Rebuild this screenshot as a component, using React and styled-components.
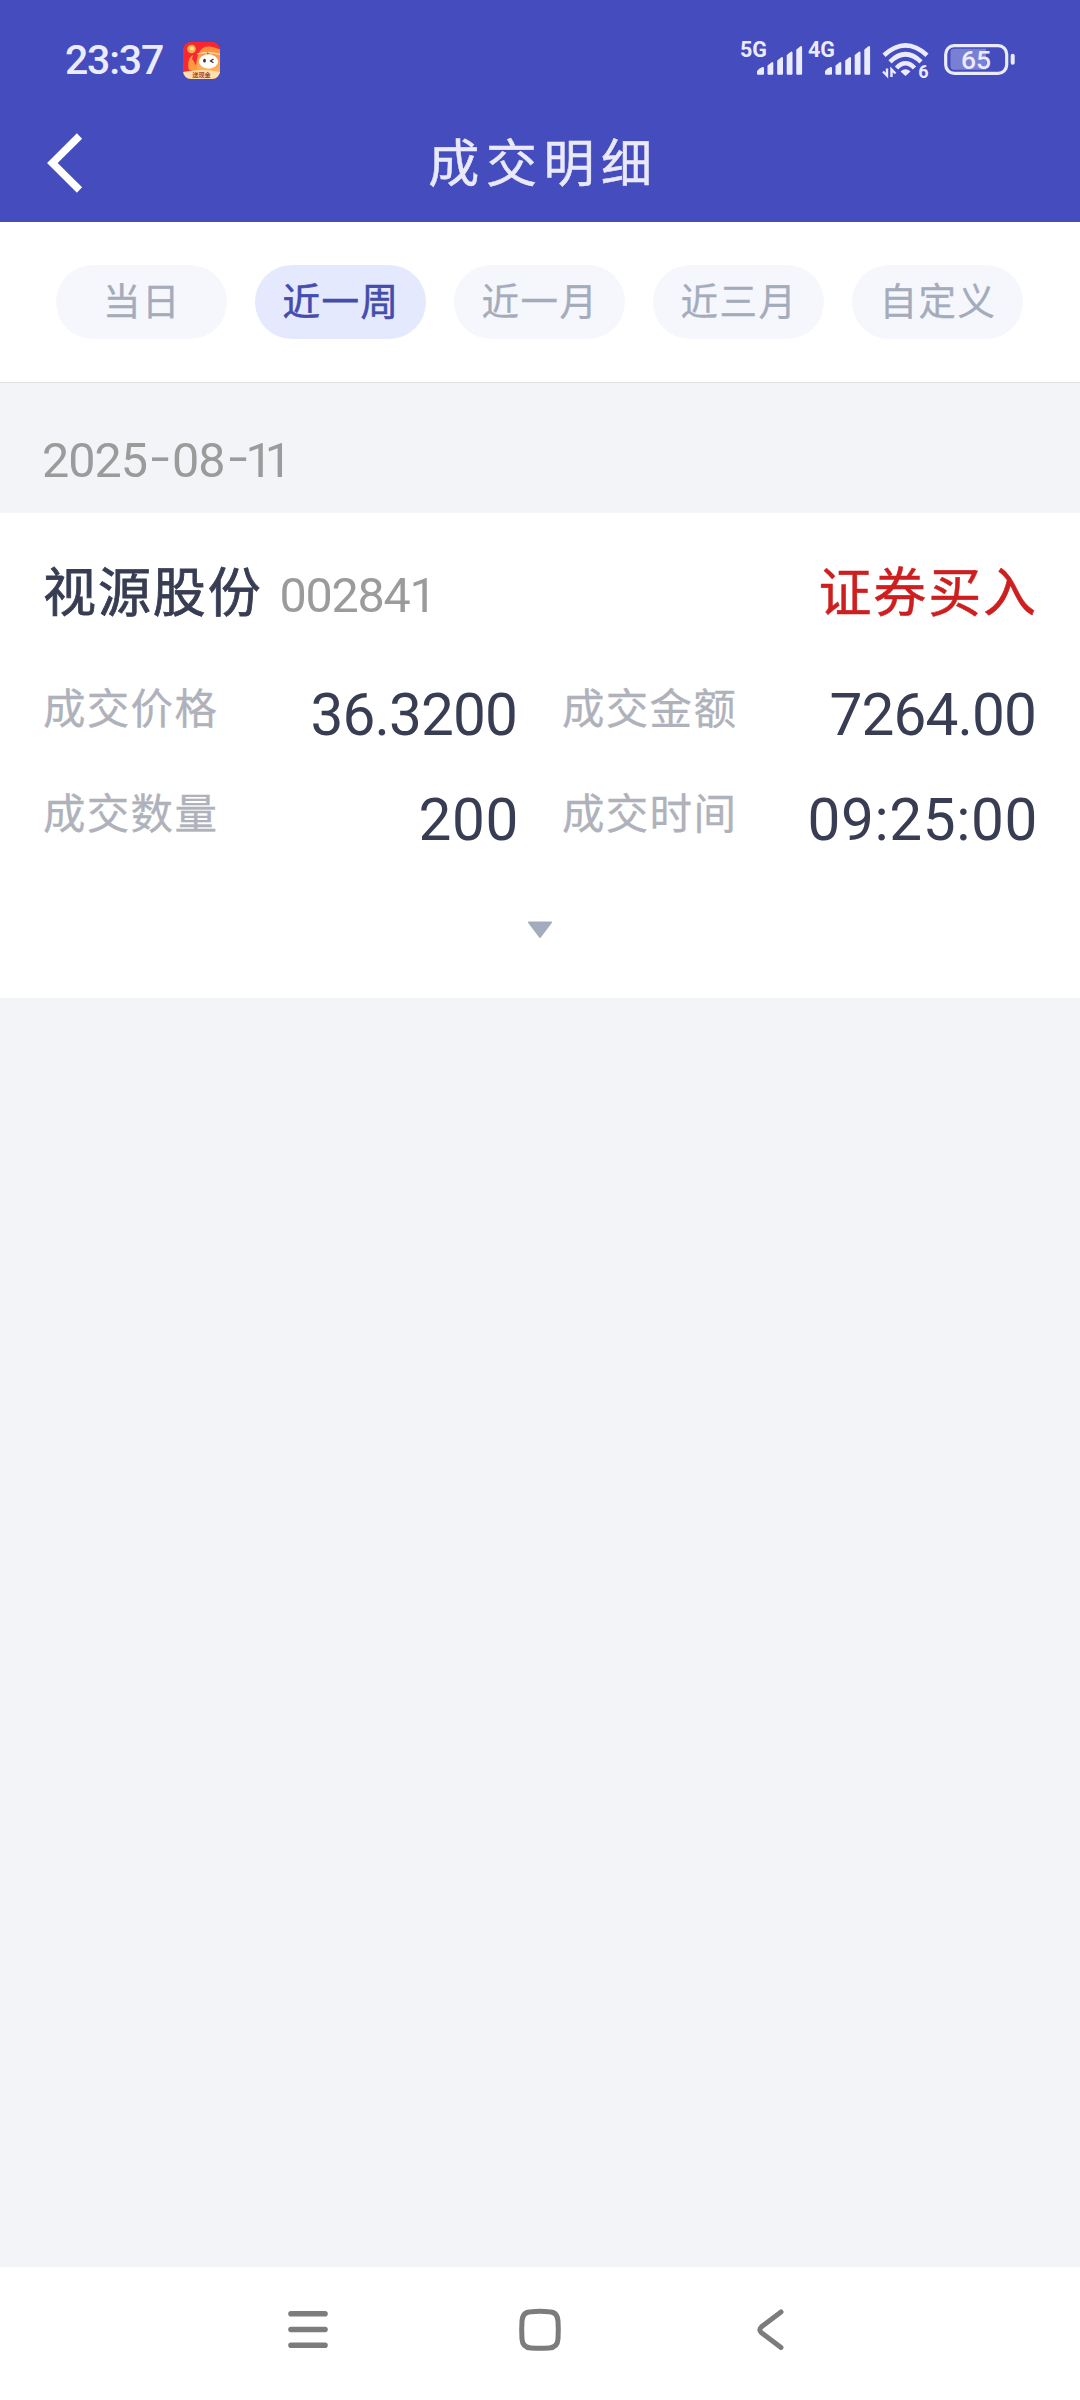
import React, { useState } from "react";
import styled, { createGlobalStyle } from "styled-components";

const GlobalStyle = createGlobalStyle`
  * {
    box-sizing: border-box;
  }

  body {
    margin: 0;
    background: #f3f4f7;
    font-family: Roboto, "Noto Sans CJK SC", sans-serif;
  }
`;

const Screen = styled.div`
  display: flex;
  flex-direction: column;
  width: 1080px;
  height: 2400px;
  background: #f3f4f7;
`;

const Header = styled.header`
  height: 222px;
  background: #444cbe;
`;

const StatusBar = styled.div`
  display: flex;
  align-items: center;
  height: 104px;
  padding: 16px 65px 0 65px;
  color: #ebebff;
`;

const Clock = styled.span`
  width: 118px;
  font-size: 41px;
  font-weight: 500;
  line-height: 48px;
  letter-spacing: -1.2px;
`;

const StatusIcons = styled.div`
  display: flex;
  margin-left: auto;
`;

const StatusIcon = styled.svg`
  height: 52px;
`;

const TitleBar = styled.div`
  display: grid;
  grid-template-columns: 120px 1fr 120px;
  align-items: center;
  height: 118px;
`;

const BackButton = styled.button`
  display: flex;
  padding: 0 0 0 44px;
  border: 0;
  background: none;
`;

const Title = styled.h1`
  margin: 0;
  padding: 4px 0 0 7px;
  color: #e9e9f9;
  font-size: 51px;
  font-weight: 400;
  line-height: 60px;
  letter-spacing: 6.6px;
  text-align: center;
  -webkit-text-stroke: 0.5px #e9e9f9;
`;

const Tabs = styled.nav`
  display: flex;
  gap: 28px;
  height: 161px;
  padding: 43px 56px 0;
  border-bottom: 1px solid #e2e2e3;
  background: #fff;
`;

const Tab = styled.button`
  width: 171px;
  height: 74px;
  padding: 1px 0 0 1px;
  border: 0;
  border-radius: 37px;
  background: ${(props) => (props.$active ? "#e5e9fe" : "#f6f7fc")};
  color: ${(props) => (props.$active ? "#444cac" : "#a4acbc")};
  font-family: inherit;
  font-size: 37.5px;
  line-height: 73px;
  letter-spacing: 1.5px;
  text-align: center;
  -webkit-text-stroke: ${(props) => (props.$active ? "0.6px" : "0.3px")};
`;

const DateRow = styled.div`
  height: 130px;
  padding: 49px 42px 0;
  color: #9b9b9b;
  font-size: 48.5px;
  line-height: 58px;
  letter-spacing: -1px;
`;

const Dash = styled.span`
  display: inline-block;
  width: 25px;
  text-align: center;
  transform: translateY(-3px) scaleX(1.4);
`;

const Day = styled.span`
  margin-left: -4px;
  letter-spacing: -8px;
`;

const Card = styled.section`
  display: flex;
  flex-direction: column;
  height: 485px;
  padding: 46px 43px 0;
  background: #fff;
`;

const CardHead = styled.div`
  display: flex;
  align-items: baseline;
  height: 112px;
  line-height: 70px;
`;

const StockName = styled.span`
  color: #383d54;
  font-size: 53px;
  letter-spacing: 1.9px;
  -webkit-text-stroke: 0.8px #383d54;
`;

const StockCode = styled.span`
  margin-left: 17px;
  color: #9b9b9b;
  font-size: 48.5px;
  letter-spacing: -1.3px;
`;

const Side = styled.span`
  margin: 0 -1px 0 auto;
  color: #cd1f1f;
  font-size: 53px;
  letter-spacing: 1.9px;
  -webkit-text-stroke: 0.5px #cd1f1f;
`;

const Fields = styled.dl`
  display: grid;
  grid-template-columns: 475px 475px;
  grid-auto-rows: 105px;
  column-gap: 44px;
  margin: 0;
`;

const Field = styled.div`
  display: flex;
  justify-content: space-between;
`;

const Label = styled.dt`
  padding-top: 9px;
  color: #afb1bb;
  font-size: 42.5px;
  line-height: 60px;
  letter-spacing: 1.3px;
  -webkit-text-stroke: 0.3px #afb1bb;
`;

const Value = styled.dd`
  margin: 0 ${(props) => (props.$decimal ? "1px" : "-1px")} 0 0;
  padding-top: 9px;
  color: #383d54;
  font-size: 58.5px;
  line-height: 70px;
  letter-spacing: ${(props) => (props.$decimal ? "-0.9px" : "0.6px")};
`;

const Expand = styled.button`
  align-self: center;
  display: flex;
  margin-top: 40px;
  padding: 0;
  border: 0;
  background: none;
`;

const NavBar = styled.footer`
  display: flex;
  justify-content: space-between;
  align-items: center;
  height: 133px;
  margin-top: auto;
  padding: 0 285px 8px;
  background: #fff;
`;

const AppBadge = () => (
  <svg width="37" height="37" viewBox="0 0 37 37">
    <defs>
      <clipPath id="badge">
        <rect width="37" height="37" rx="8" />
      </clipPath>
      <linearGradient id="hair" x1="0" y1="0" x2="0" y2="1">
        <stop offset="0" stopColor="#ff8a3c" />
        <stop offset="1" stopColor="#ffb65a" />
      </linearGradient>
    </defs>
    <g clipPath="url(#badge)">
      <rect width="37" height="37" fill="#f7282f" />
      <path d="M13 30C13 14 16 6 24 4.500C31 4 35 8 38 7V32H12Z" fill="url(#hair)" />
      <path d="M6 28C4 21 6 15 10 13L9 17C12 20 13 24 15 29Z" fill="#ff9a3e" />
      <circle cx="8.500" cy="7" r="4.300" fill="#ffb04a" />
      <circle cx="9" cy="6.500" r="2" fill="#ffe39a" />
      <path d="M14 12Q26 9 37 12.500" fill="none" stroke="#ffdca4" strokeWidth="1.200" />
      <path d="M24 10l3 2-3 1z" fill="#e9502b" />
      <ellipse cx="25.500" cy="19.500" rx="9.500" ry="7.200" fill="#fff" />
      <ellipse cx="21.500" cy="18.700" rx="1.400" ry="1.900" fill="#46302e" />
      <path d="M30.500 17l-3 2 3 1.700" fill="none" stroke="#46302e" strokeWidth="1.300" />
      <path d="M0 30Q18 26 37 30V37H0Z" fill="#ffdfae" />
      <text x="18.500" y="35.300" fill="#a8452a" fontSize="6.200" fontWeight="700" textAnchor="middle">
        送现金
      </text>
    </g>
  </svg>
);

const Signal = ({ label }) => (
  <StatusIcon width="68" viewBox="0 -6 68 52">
    <text x="0" y="17.300" fill="#ebebff" fontSize="21.500" fontWeight="700">
      {label}
    </text>
    <g fill="#ebebff" stroke="#ebebff" strokeWidth="2" strokeLinejoin="round">
      <path d="M18 31.500L20 29.500L23 28V33.700H18Z" />
      <path d="M28.500 26L32.300 23V33.700H28.500Z" />
      <path d="M38.200 21L42 18V33.700H38.200Z" />
      <path d="M47.700 15.500L51.500 12.500V33.700H47.700Z" />
      <path d="M57.300 10L61.100 7V33.700H57.300Z" />
    </g>
  </StatusIcon>
);

const Wifi = () => (
  <StatusIcon width="68" viewBox="0 -6 68 52">
    <g fill="none" stroke="#ebebff" strokeWidth="4.600">
      <path d="M8 15.200Q29.500 -4.600 51 15.200" />
      <path d="M14 21.800Q29.500 6.800 45 21.800" />
      <path d="M20.500 28Q29.500 18.500 38.500 28" />
    </g>
    <path d="M29.500 36L24.500 31.500Q29.500 27 34.500 31.500Z" fill="#ebebff" />
    <path d="M7 31.500l4 4V28.500M15.500 37V29.500l4 4" fill="none" stroke="#ebebff" strokeWidth="2.400" />
    <text x="42.200" y="38.300" fill="#ebebff" fontSize="18" fontWeight="700">
      6
    </text>
  </StatusIcon>
);

const Battery = () => (
  <StatusIcon width="71" viewBox="0 -6 71 52">
    <rect x="1.700" y="5.700" width="61" height="27.600" rx="8.500" fill="none" stroke="#ebebff" strokeWidth="3.200" />
    <path d="M10 8.800H42V29.800H10Q6.500 29.800 6.500 26V12Q6.500 8.800 10 8.800Z" fill="#797fd3" />
    <rect x="66.700" y="13.700" width="4" height="11" rx="2" fill="#ebebff" />
    <text x="32" y="29.300" fill="#ebebff" fontSize="26.500" fontWeight="500" textAnchor="middle">
      65
    </text>
  </StatusIcon>
);

const tabs = ["当日", "近一周", "近一月", "近三月", "自定义"];

const [year, month, day] = "2025-08-11".split("-");

const fields = [
  { label: "成交价格", value: "36.3200" },
  { label: "成交金额", value: "7264.00" },
  { label: "成交数量", value: "200" },
  { label: "成交时间", value: "09:25:00" },
];

const App = () => {
  const [active, setActive] = useState("近一周");

  return (
    <Screen>
      <GlobalStyle />
      <Header>
        <StatusBar>
          <Clock>23:37</Clock>
          <AppBadge />
          <StatusIcons>
            <Signal label="5G" />
            <Signal label="4G" />
            <Wifi />
            <Battery />
          </StatusIcons>
        </StatusBar>
        <TitleBar>
          <BackButton aria-label="返回">
            <svg width="40" height="62" viewBox="0 0 40 62">
              <path d="M35.500 4L8.300 31L35.500 58" fill="none" stroke="#fff" strokeWidth="7.400" />
            </svg>
          </BackButton>
          <Title>成交明细</Title>
        </TitleBar>
      </Header>
      <Tabs>
        {tabs.map((tab) => (
          <Tab key={tab} $active={tab === active} onClick={() => setActive(tab)}>
            {tab}
          </Tab>
        ))}
      </Tabs>
      <DateRow>
        {year}
        <Dash>-</Dash>
        {month}
        <Dash>-</Dash>
        <Day>{day}</Day>
      </DateRow>
      <Card>
        <CardHead>
          <StockName>视源股份</StockName>
          <StockCode>002841</StockCode>
          <Side>证券买入</Side>
        </CardHead>
        <Fields>
          {fields.map((field) => (
            <Field key={field.label}>
              <Label>{field.label}</Label>
              <Value $decimal={field.value.includes(".")}>{field.value}</Value>
            </Field>
          ))}
        </Fields>
        <Expand aria-label="展开">
          <svg width="26" height="18" viewBox="0 0 26 18">
            <path d="M2 1.500H24L13 16Z" fill="#a3acbd" stroke="#a3acbd" strokeWidth="2" strokeLinejoin="round" />
          </svg>
        </Expand>
      </Card>
      <NavBar>
        <svg width="46" height="46" viewBox="0 0 46 46">
          <path d="M6 6.700H40M6 22.500H40M6 38.300H40" stroke="#7c7c7c" strokeWidth="5.600" strokeLinecap="round" />
        </svg>
        <svg width="46" height="46" viewBox="0 0 46 46">
          <path
            d="M14 4.700Q23 4 32 4.700Q40.500 5 41 14Q41.600 23 41 32Q40.500 40.500 32 41Q23 41.700 14 41Q5.500 40.500 5 32Q4.400 23 5 14Q5.500 5 14 4.700Z"
            fill="none"
            stroke="#7c7c7c"
            strokeWidth="5"
          />
        </svg>
        <svg width="46" height="46" viewBox="0 0 46 46">
          <path d="M32 5L12.500 19.800Q9 22.800 12.500 25.800L32 40.600" fill="none" stroke="#7c7c7c" strokeWidth="5" strokeLinecap="round" />
        </svg>
      </NavBar>
    </Screen>
  );
};

export default App;
